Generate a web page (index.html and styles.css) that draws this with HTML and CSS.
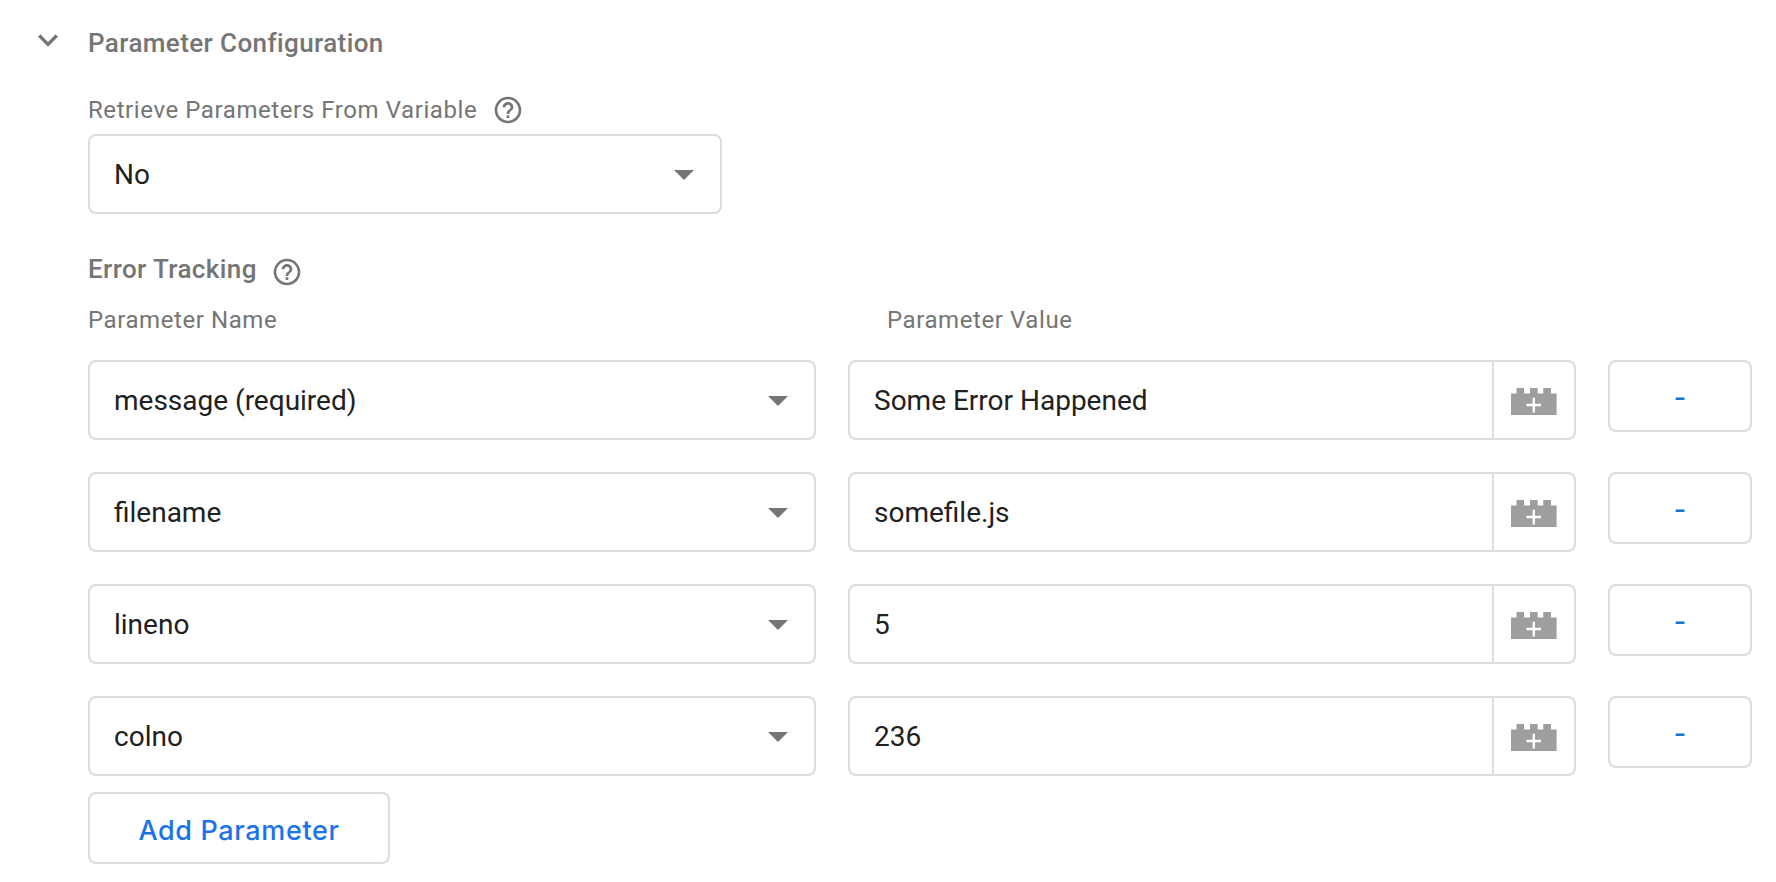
FILE: index.html
```html
<!DOCTYPE html>
<html lang="en">
<head>
<meta charset="utf-8">
<title>Parameter Configuration</title>
<link rel="stylesheet" href="styles.css">
</head>
<body>
<svg class="defs" aria-hidden="true">
  <symbol id="help" viewBox="0 0 24 24"><path d="M11 18h2v-2h-2v2zm1-16C6.480 2 2 6.480 2 12s4.480 10 10 10 10-4.480 10-10S17.520 2 12 2zm0 18c-4.410 0-8-3.590-8-8s3.590-8 8-8 8 3.590 8 8-3.590 8-8 8zm0-14c-2.210 0-4 1.790-4 4h2c0-1.100.900-2 2-2s2 .900 2 2c0 2-3 1.750-3 5h2c0-2.250 3-2.500 3-5 0-2.210-1.790-4-4-4z"/></symbol>
  <symbol id="brick" viewBox="0 0 46 27"><path fill="#9e9e9e" d="M0 5.500H5.500V0H13V5.500H19V0H26.700V5.500H32.300V0H40V5.500H45.600V27H0z"/><path stroke="#fff" stroke-width="2.400" d="M15.500 17H30M22.800 9.700V24.500"/></symbol>
</svg>
<main class="section">
  <button class="toggle" aria-label="Collapse"><svg viewBox="0 0 24 24"><path d="M16.590 8.590L12 13.170 7.410 8.590 6 10l6 6 6-6z"/></svg></button>
  <div class="content">
    <h2 class="title">Parameter Configuration</h2>
    <div class="label label-retrieve"><span>Retrieve Parameters From Variable</span><svg class="help"><use href="#help"/></svg></div>
    <div class="field select select-short"><span class="choice">No</span><i class="arrow"></i></div>
    <h3 class="title subtitle"><span class="tracking">Error Tracking</span><svg class="help"><use href="#help"/></svg></h3>
    <div class="label columns"><span>Parameter Name</span><span>Parameter Value</span></div>
    <div class="rows">
      <div class="row">
        <div class="field select"><span class="choice">message (required)</span><i class="arrow"></i></div>
        <div class="field"><span class="text">Some Error Happened</span><span class="picker"><svg class="brick"><use href="#brick"/></svg></span></div>
        <button class="button remove">-</button>
      </div>
      <div class="row">
        <div class="field select"><span class="choice">filename</span><i class="arrow"></i></div>
        <div class="field"><span class="text">somefile.js</span><span class="picker"><svg class="brick"><use href="#brick"/></svg></span></div>
        <button class="button remove">-</button>
      </div>
      <div class="row">
        <div class="field select"><span class="choice">lineno</span><i class="arrow"></i></div>
        <div class="field"><span class="text">5</span><span class="picker"><svg class="brick"><use href="#brick"/></svg></span></div>
        <button class="button remove">-</button>
      </div>
      <div class="row">
        <div class="field select"><span class="choice">colno</span><i class="arrow"></i></div>
        <div class="field"><span class="text">236</span><span class="picker"><svg class="brick"><use href="#brick"/></svg></span></div>
        <button class="button remove">-</button>
      </div>
    </div>
    <button class="button add">Add Parameter</button>
  </div>
</main>
</body>
</html>
```
FILE: styles.css
```css
* { box-sizing: border-box; }
body { margin: 0; background: #fff; font-family: Roboto, "Liberation Sans", sans-serif; color: #212121; }
.defs { display: none; }
.section { display: flex; }
.toggle { width: 88px; height: 80px; padding: 20px 20px 20px 28px; border: 0; background: none; }
.toggle svg { display: block; width: 40px; height: 40px; fill: #757575; }
.content { width: 1664px; }
.title { margin: 0; padding-top: 27px; height: 94px; font-size: 26px; line-height: 32px; font-weight: 500; letter-spacing: 0.400px; color: #757575; }
.label { display: flex; height: 40px; font-size: 24px; line-height: 32px; letter-spacing: 0.580px; color: #757575; }
.help { width: 32px; height: 32px; margin-left: 15px; fill: #757575; }
.subtitle .help { margin-left: 14.500px; }
.field { display: flex; align-items: center; width: 728px; height: 80px; border: 2px solid #dcdcdc; border-radius: 8px; font-size: 28px; line-height: 36px; background: #fff; }
.select { justify-content: space-between; padding: 0 26px 0 24px; }
.select-short { width: 634px; }
.choice { padding-top: 2px; }
.arrow { margin-top: 2px; border: 10px solid transparent; border-top-color: #757575; border-bottom: 0; }
.subtitle { display: flex; height: 90px; padding-top: 42px; }
.tracking { margin-top: -3px; }
.columns { height: 56px; }
.columns span { width: 799px; }
.rows { display: flex; flex-direction: column; gap: 32px; }
.row { display: flex; align-items: flex-start; gap: 32px; }
.text { flex: 1; padding: 2px 0 0 24px; }
.picker { display: flex; align-items: center; width: 82px; height: 76px; padding: 2px 0 0 17px; border-left: 2px solid #dcdcdc; }
.brick { width: 46px; height: 27px; }
.button { height: 72px; padding: 0; border: 2px solid #dcdcdc; border-radius: 8px; background: #fff; color: #1a73e8; font-family: Inter, sans-serif; font-size: 27px; font-weight: 500; }
.remove { width: 144px; padding-top: 2px; color: #1f6fd6; }
.add { display: block; width: 302px; margin-top: 16px; padding-top: 5px; letter-spacing: 0.650px; }
```
